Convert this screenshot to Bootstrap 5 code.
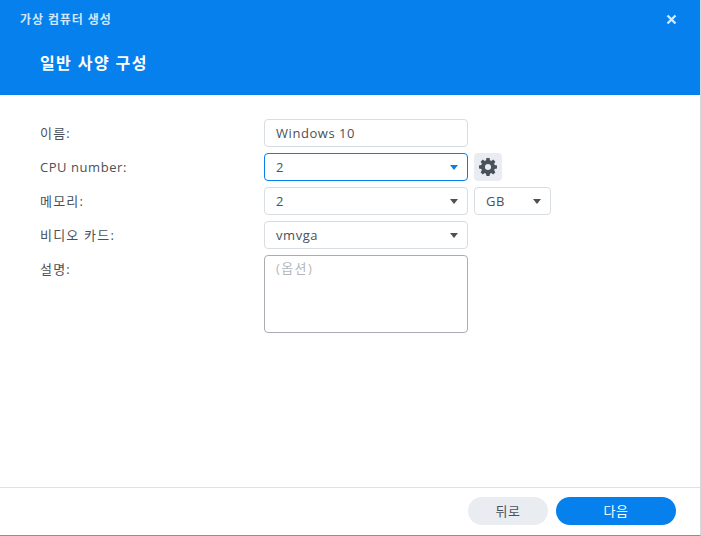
<!doctype html>
<html lang="ko"><head><meta charset="utf-8"><title>가상 컴퓨터 생성</title>
<link href="https://cdn.jsdelivr.net/npm/bootstrap@5.3.0/dist/css/bootstrap.min.css" rel="stylesheet">
<style>
html,body{height:100%;margin:0}
body{font-family:"Open Sans","Noto Sans CJK KR",sans-serif;font-size:13px;letter-spacing:.55px;color:#4a5158;background:#fff;overflow:hidden}
.wiz{height:536px;width:701px;border-bottom:1px solid #8d9094;border-right:1px solid #d5d8dc}
.wiz-head{height:95px;background:#0580ec;color:#fff}
.wiz-title{font-size:12px;font-weight:600;letter-spacing:.9px;color:#cfe6fb;padding:12px 0 0 20px;line-height:16px}
.wiz-sub{font-size:16px;font-weight:700;letter-spacing:1.4px;padding:24px 0 0 40px;line-height:22px}
.wiz-close{top:13px;right:22px;width:13px;height:13px;line-height:0}
.wiz-body{padding:24px 0 0 40px;gap:6px}
.lbl{width:224px;line-height:28px;height:28px;flex:none}
.ko{letter-spacing:1.2px}
.fld{width:204px;height:28px;border:1px solid #d8dde2;border-radius:4px;padding:0 9px 0 11px;line-height:26px;background:#fff;color:#4a5158;flex:none}
.fld.on{border-color:#0580ec}
.fld.sm{width:77px;margin-left:6px}
.tall{height:78px;border-color:#a9adb2;color:#b4b8bc;line-height:24px;letter-spacing:1.4px}
.caret{width:0;height:0;border-left:4.5px solid transparent;border-right:4.5px solid transparent;border-top:5px solid #4a5158}
.on .caret{border-top-color:#0580ec}
.gear{width:28px;height:28px;background:#e9edf2;border-radius:4px;margin-left:6px}
.wiz-foot{height:48px;border-top:1px solid #dfe2e5;padding:9px 24px 0 0;gap:8px}
.pill{height:28px;line-height:26px;border-radius:14px;padding:0;font-size:13px;letter-spacing:.48px;border:0}
.pill-back{width:80px;background:#e9edf2;color:#4a5158}
.pill-next{width:120px;background:#0580ec;color:#fff}
</style></head>
<body>
<div class="wiz d-flex flex-column">
  <div class="wiz-head position-relative flex-none">
    <div class="wiz-title">가상 컴퓨터 생성</div>
    <div class="wiz-sub">일반 사양 구성</div>
    <div class="wiz-close position-absolute"><svg width="13" height="13" viewBox="0 0 13 13"><path d="M2.5 2.5l8 8M10.5 2.5l-8 8" stroke="#d4e9fc" stroke-width="2.4" fill="none"/></svg></div>
  </div>
  <div class="wiz-body flex-grow-1 d-flex flex-column">
    <div class="d-flex"><div class="lbl ko">이름:</div><div class="fld">Windows 10</div></div>
    <div class="d-flex"><div class="lbl">CPU number:</div><div class="fld on d-flex align-items-center justify-content-between"><span>2</span><i class="caret"></i></div>
      <div class="gear d-flex align-items-center justify-content-center flex-none"><svg width="18" height="18" viewBox="0 0 20 20"><path fill="#4a5158" fill-rule="evenodd" d="M8.3 0h3.4l.5 2.6 1.4.6 2.2-1.4 2.4 2.4-1.4 2.2.6 1.4 2.6.5v3.4l-2.6.5-.6 1.4 1.4 2.2-2.4 2.4-2.2-1.4-1.4.6-.5 2.5H8.3l-.5-2.5-1.4-.6-2.2 1.4-2.4-2.4 1.4-2.2-.6-1.4L0 11.7V8.3l2.6-.5.6-1.4-1.4-2.2 2.4-2.4 2.2 1.4 1.4-.6zM10 6.6a3.4 3.4 0 1 0 0 6.8 3.4 3.4 0 0 0 0-6.8z"/></svg></div></div>
    <div class="d-flex"><div class="lbl ko">메모리:</div><div class="fld d-flex align-items-center justify-content-between"><span>2</span><i class="caret"></i></div>
      <div class="fld sm d-flex align-items-center justify-content-between"><span>GB</span><i class="caret"></i></div></div>
    <div class="d-flex"><div class="lbl ko">비디오 카드:</div><div class="fld d-flex align-items-center justify-content-between"><span>vmvga</span><i class="caret"></i></div></div>
    <div class="d-flex"><div class="lbl ko">설명:</div><div class="fld tall">(옵션)</div></div>
  </div>
  <div class="wiz-foot d-flex justify-content-end">
    <button type="button" class="btn pill pill-back">뒤로</button>
    <button type="button" class="btn pill pill-next">다음</button>
  </div>
</div>
<script src="https://cdn.jsdelivr.net/npm/bootstrap@5.3.0/dist/js/bootstrap.bundle.min.js"></script>
</body></html>
